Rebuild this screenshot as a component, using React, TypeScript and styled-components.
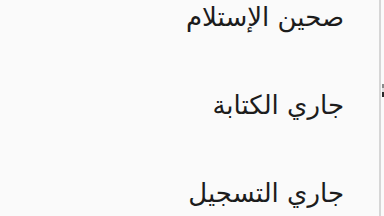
import React from 'react';
import styled, { createGlobalStyle } from 'styled-components';

const GlobalStyle = createGlobalStyle`
  html, body {
    margin: 0;
    padding: 0;
    background: #fafafa;
    overflow: hidden;
  }
`;

const Screen = styled.div`
  position: relative;
  width: 384px;
  height: 216px;
  overflow: hidden;
  background: #fafafa;
  display: flex;
`;

const Panel = styled.section`
  width: 381px;
  height: 216px;
  border-right: 2px solid #d6d6d6;
  box-sizing: border-box;
  overflow: hidden;
`;

const List = styled.ul`
  list-style: none;
  margin: -27px 0 0;
  padding: 0;
  direction: rtl;
`;

const Row = styled.li`
  height: 88px;
  display: flex;
  align-items: center;
  padding-right: 35px;
  font-family: "DejaVu Sans", "Noto Sans", sans-serif;
  font-size: 26px;
  color: #1c1c1c;
`;

const Edge = styled.div`
  position: absolute;
  right: 0;
  top: 84px;
  width: 2px;
  height: 13px;
  background: linear-gradient(#8a8a8a 0 30%, #e0e0e0 30% 60%, #2a2a2a 60% 100%);
`;

const items = ['صحين الإستلام', 'جاري الكتابة', 'جاري التسجيل'];

export default function App() {
  return (
    <>
      <GlobalStyle />
      <Screen>
        <Panel>
          <List>
            {items.map((label) => (
              <Row key={label}>{label}</Row>
            ))}
          </List>
        </Panel>
        <Edge />
      </Screen>
    </>
  );
}
